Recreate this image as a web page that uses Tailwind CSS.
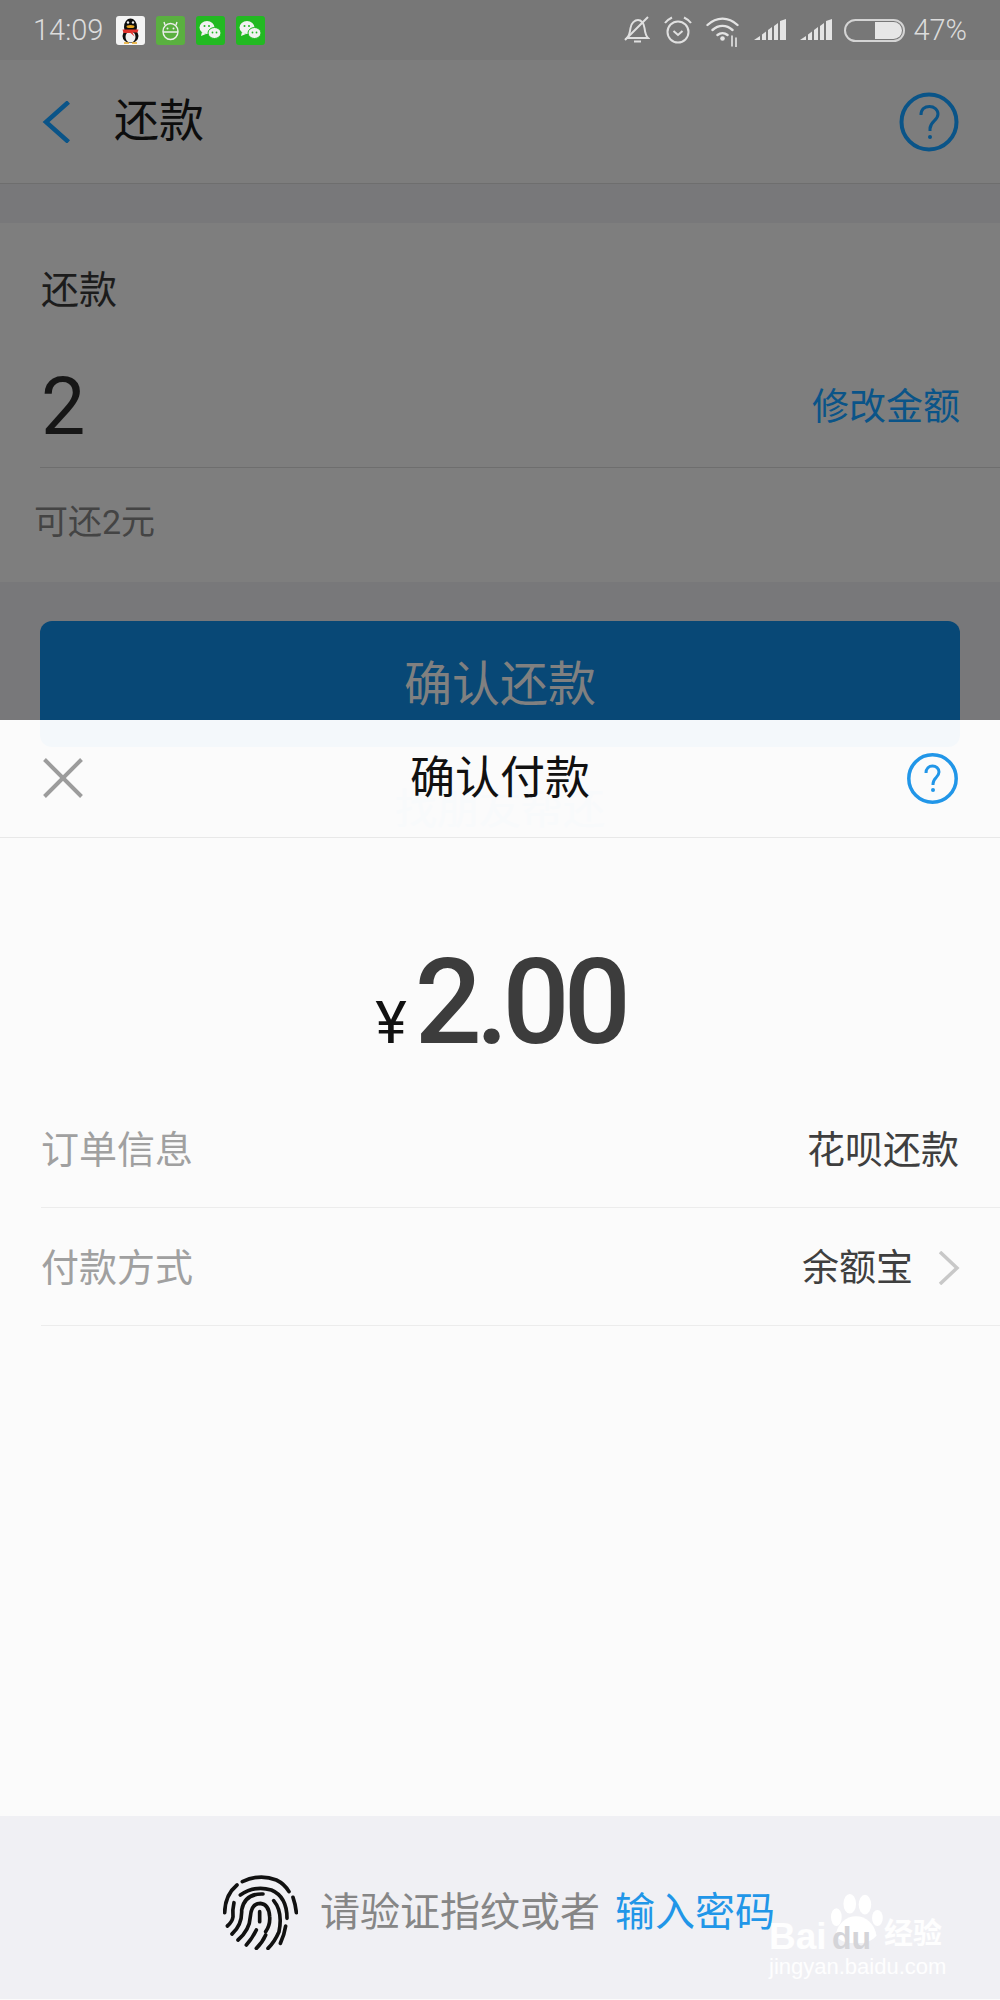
<!DOCTYPE html>
<html><head><meta charset="utf-8"><script src="https://cdn.jsdelivr.net/npm/@tailwindcss/browser@4"></script></head>
<body class="m-0">
<div class="relative w-[1000px] h-[2000px] overflow-hidden bg-[#78787a] font-['Roboto','Noto_Sans_CJK_SC',sans-serif]">
  <!-- status bar -->
  <div class="h-[60px] bg-[#777777] flex items-center pl-[33px] pr-[33px] text-[#dcdcdc]">
    <span class="text-[29px] leading-none w-[72px] font-light">14:09</span>
    <div class="flex gap-[11px] ml-[11px]">
      <svg width="29" height="29" viewBox="0 0 29 29"><rect width="29" height="29" rx="3" fill="#f4f4f4"/><ellipse cx="14.500" cy="11" rx="6.500" ry="8.500" fill="#0d0d0d"/><ellipse cx="14.500" cy="20" rx="8" ry="7" fill="#0d0d0d"/><ellipse cx="14.500" cy="21" rx="5" ry="5.500" fill="#f0f0f0"/><path d="M6.500 13.500h16l-1 3h-5l2 4-4-3.500h-7z" fill="#e0322c"/><ellipse cx="14.500" cy="10.500" rx="4" ry="1.500" fill="#e8a820"/><circle cx="12" cy="6.500" r="1.200" fill="#eee"/><circle cx="17" cy="6.500" r="1.200" fill="#eee"/><path d="M8 27h5M16 27h5" stroke="#e8a820" stroke-width="1.500"/></svg>
      <svg width="29" height="29" viewBox="0 0 29 29"><rect width="29" height="29" rx="3" fill="#5ab040"/><ellipse cx="14.500" cy="15.500" rx="7.500" ry="8" fill="none" stroke="#eee" stroke-width="1.400"/><path d="M7 16h15M9 9L8 6M20 9l1-3" stroke="#eee" stroke-width="1.400"/><circle cx="11.500" cy="12.500" r="1" fill="#eee"/><circle cx="17.500" cy="12.500" r="1" fill="#eee"/></svg>
      <svg width="29" height="29" viewBox="0 0 29 29"><rect width="29" height="29" rx="3" fill="#22b922"/><ellipse cx="11" cy="11.500" rx="7.500" ry="6.500" fill="#f2f2f2"/><path d="M6 16l-1 4 5-2z" fill="#f2f2f2"/><ellipse cx="18.500" cy="17" rx="6.500" ry="5.500" fill="#f2f2f2" stroke="#22b922"/><circle cx="8.500" cy="10" r="1" fill="#22b922"/><circle cx="13" cy="10" r="1" fill="#22b922"/><circle cx="16.500" cy="16.500" r=".9" fill="#22b922"/><circle cx="20.500" cy="16.500" r=".9" fill="#22b922"/></svg>
      <svg width="29" height="29" viewBox="0 0 29 29"><rect width="29" height="29" rx="3" fill="#22b922"/><ellipse cx="11" cy="11.500" rx="7.500" ry="6.500" fill="#f2f2f2"/><path d="M6 16l-1 4 5-2z" fill="#f2f2f2"/><ellipse cx="18.500" cy="17" rx="6.500" ry="5.500" fill="#f2f2f2" stroke="#22b922"/><circle cx="8.500" cy="10" r="1" fill="#22b922"/><circle cx="13" cy="10" r="1" fill="#22b922"/><circle cx="16.500" cy="16.500" r=".9" fill="#22b922"/><circle cx="20.500" cy="16.500" r=".9" fill="#22b922"/></svg>
    </div>
    <div class="ml-auto flex items-center">
      <svg width="26" height="28" viewBox="0 0 26 28" fill="none" stroke="#e0e0e0" stroke-width="2"><path d="M3 22h21c-2.500-2.500-3-6-3.500-10C20 7 17 4 14 4S7 7 6.500 12C6 16 5 20 3 22ZM10 25.500h7"/><path d="M1 24L24 1"/></svg>
      <svg class="ml-[14px]" width="28" height="28" viewBox="0 0 28 28" fill="none" stroke="#e0e0e0" stroke-width="2"><circle cx="14" cy="16" r="10.500"/><path d="M9.500 15l4.500 4 4.500-4M1 7c2-3 4-4 7-5.500M27 7c-2-3-4-4-7-5.500"/></svg>
      <svg class="ml-[14px] mt-[4px]" width="33" height="30" viewBox="0 0 33 30" fill="none" stroke="#e4e4e4" stroke-width="2.400" stroke-linecap="round"><path d="M1.500 8c9-8.500 21-8.500 30 0M6.500 13c6-5.500 14-5.500 20 0M11.500 18c3-2.500 7-2.500 10 0"/><circle cx="16.500" cy="21.500" r="2.300" fill="#e4e4e4" stroke="none"/><path d="M26 19v10M30 21v9" stroke-width="1.600"/></svg>
      <svg class="ml-[15px]" width="32" height="22" viewBox="0 0 32 22" fill="#e4e4e4"><path d="M0 21l6-4v4zM8 15.500l4-3V21H8zM14 11l4-3v13h-4zM20 7l4-3v17h-4zM26 2l6-2v21h-6z"/></svg>
      <svg class="ml-[14px]" width="32" height="22" viewBox="0 0 32 22" fill="#e4e4e4"><path d="M0 21l6-4v4zM8 15.500l4-3V21H8zM14 11l4-3v13h-4zM20 7l4-3v17h-4zM26 2l6-2v21h-6z"/></svg>
      <div class="ml-[12px] w-[61px] h-[23px] rounded-full border-2 border-[#d4d4d4] flex justify-end items-center pr-[1px]"><div class="w-[27px] h-[17px] bg-[#e6e6e6] rounded-r-full"></div></div>
      <span class="ml-[8px] text-[29px] leading-none font-light">47%</span>
    </div>
  </div>
  <!-- header -->
  <div class="h-[124px] bg-[#7d7d7d] border-b border-[#6e6e6e] flex items-center pl-[42px] pr-[41px]">
    <svg width="28" height="42" viewBox="0 0 28 42" fill="none" stroke="#0a5488" stroke-width="4.500"><path d="M26.500 1L4 21l22.500 20"/></svg>
    <span class="ml-[44px] text-[45px] leading-none text-[#0d0d0d]">还款</span>
    <svg class="ml-auto" width="60" height="60" viewBox="0 0 60 60" fill="none" stroke="#0a5488"><circle cx="30" cy="30" r="27.500" stroke-width="4"/><path d="M22 23c0-6 4-8.500 8.500-8.500S39 17.500 39 22c0 7-8 7-8 15v2" stroke-width="3"/><circle cx="31" cy="45" r="2" fill="#0a5488" stroke="none"/></svg>
  </div>
  <!-- card -->
  <div class="mt-[39px] h-[359px] bg-[#7e7e7e]">
    <div class="pt-[47px] pl-[41px] text-[38px] leading-[40px] text-[#1c1c1c]">还款</div>
    <div class="ml-[40px] h-[158px] pt-[38px] flex items-center justify-between pr-[40px] border-b border-[#6e6e6e]">
      <span class="text-[79px] leading-none text-[#161616] pl-[1px]">2</span>
      <span class="text-[37px] leading-none text-[#0a5488]">修改金额</span>
    </div>
    <div class="pl-[34px] mt-[34px] text-[34px] leading-[40px] text-[#444]">可还2元</div>
  </div>
  <!-- button -->
  <div class="mx-[40px] mt-[39px] h-[126px] rounded-[12px] bg-[#084876] flex items-center justify-center text-[48px] leading-none text-[#808080] pt-[2px]">确认还款</div>

  <!-- sheet -->
  <div class="absolute left-0 top-[720px] w-[1000px] h-[1280px] flex flex-col bg-[#fbfbfb]">
    <div class="absolute left-[40px] top-0 w-[920px] h-[27px] rounded-b-[12px] bg-[#f4f8fb]"></div>
    <div class="absolute left-[395px] top-[69px] text-[42px] leading-none text-[#f8fafb]">找朋友帮还</div>
    <div class="relative h-[118px] flex items-center justify-center border-b border-[#e8e8e8]">
      <svg class="absolute left-[43px] top-[38px]" width="40" height="40" viewBox="0 0 40 40" stroke="#9c9c9c" stroke-width="4"><path d="M1.500 1.500l37 37M38.500 1.500l-37 37"/></svg>
      <span class="text-[45px] leading-none text-[#111]">确认付款</span>
      <svg class="absolute left-[907px] top-[33px]" width="51" height="51" viewBox="0 0 51 51" fill="none" stroke="#2196e8"><circle cx="25.500" cy="25.500" r="23.700" stroke-width="3.500"/><path d="M19 20c0-4.500 3-7 6.500-7s6.500 2.500 6.500 6c0 5.500-6 5.500-6 12v1" stroke-width="3"/><circle cx="26" cy="37" r="2" fill="#2196e8" stroke="none"/></svg>
    </div>
    <div class="flex-none h-[252px] pt-[106px] flex items-baseline justify-center text-[#3c3c3c]">
      <span class="text-[60px] leading-none mr-[8px] text-[#111]">¥</span>
      <span class="text-[118px] leading-none font-medium tracking-[-6px]">2.00</span>
    </div>
    <div class="flex-none ml-[41px] h-[118px] pt-[3px] flex items-center justify-between border-b border-[#ececec] pr-[41px]">
      <span class="text-[38px] leading-none text-[#a0a0a0]">订单信息</span>
      <span class="text-[38px] leading-none text-[#3f3f3f]">花呗还款</span>
    </div>
    <div class="flex-none ml-[41px] h-[118px] pt-[3px] flex items-center justify-between border-b border-[#ececec] pr-[40px]">
      <span class="text-[38px] leading-none text-[#a0a0a0]">付款方式</span>
      <span class="flex items-center text-[37px] leading-none text-[#3f3f3f]">余额宝
        <svg class="ml-[25px]" width="22" height="34" viewBox="0 0 22 34" fill="none" stroke="#c8c8c8" stroke-width="3.500"><path d="M2 1l17 16L2 33"/></svg>
      </span>
    </div>
    <div class="flex-1"></div>
    <div class="relative h-[183px] pt-[10px] bg-[#f0f0f4] flex items-center pl-[223px] mb-[1px]">
      <svg width="75" height="75" viewBox="70 45 225 225" fill="none" stroke="#111" stroke-width="11" stroke-linecap="round">
        <path d="M128 65Q180 40 230 60Q255 72 268 95"/>
        <path d="M112 75Q76 105 75 158"/>
        <path d="M280 112Q288 135 290 158"/>
        <path d="M122 105Q165 75 215 90Q262 110 262 175"/>
        <path d="M103 128Q98 150 100 170Q98 185 83 198"/>
        <path d="M190 102Q135 100 126 150Q128 195 97 222"/>
        <path d="M222 122Q250 155 238 215Q225 245 205 265"/>
        <path d="M258 198Q254 225 242 250"/>
        <path d="M115 240Q150 210 152 170Q155 130 182 130Q208 132 210 170Q212 195 198 215"/>
        <path d="M180 155V185"/>
        <path d="M170 210Q158 235 140 255"/>
        <path d="M198 225Q188 248 170 265"/>
      </svg>
      <span class="ml-[22px] text-[40px] leading-none text-[#868686]">请验证指纹或者</span>
      <span class="ml-[15px] text-[40px] leading-none text-[#2196e8]">输入密码</span>
      <div class="absolute left-[769px] top-[77px] w-[200px] h-[100px] text-white/90">
        <svg class="absolute left-[59px] top-0" width="56" height="50" viewBox="0 0 62 56" fill="#fff"><ellipse cx="9" cy="27" rx="6" ry="10"/><ellipse cx="24" cy="12" rx="7" ry="11"/><ellipse cx="41" cy="13" rx="7" ry="11"/><ellipse cx="55" cy="28" rx="6" ry="9"/><path d="M8 48c2-14 12-22 23-22s21 8 23 22c-10 12-36 12-46 0z"/></svg>
        <span class="absolute left-0 top-[25px] text-[37px] font-bold leading-none font-['Liberation_Sans',sans-serif]">Bai</span>
        <span class="absolute left-[63px] top-[29px] text-[32px] font-bold leading-none text-[#d4d4d8] font-['Liberation_Sans',sans-serif]">du</span>
        <span class="absolute left-[115px] top-[27px] text-[29px] leading-none font-bold">经验</span>
        <span class="absolute left-0 top-[63px] text-[22px] leading-none font-['Liberation_Sans',sans-serif]">jingyan.baidu.com</span>
      </div>
    </div>
  </div>
</div>
</body></html>
